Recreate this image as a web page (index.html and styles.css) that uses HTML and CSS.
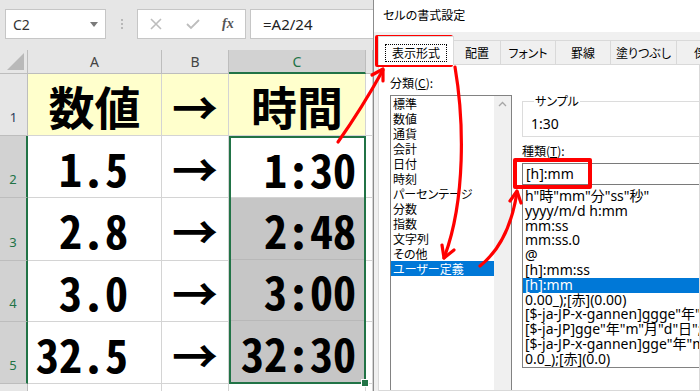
FILE: index.html
```html
<!DOCTYPE html>
<html lang="ja">
<head>
  <meta charset="UTF-8">
  <title>数値を時間に変換</title>
  <link rel="stylesheet" href="styles.css">
</head>
<body>
  <div class="screen">
    <div class="excel">
      <div class="formula-bar">
        <div class="name-box"><span>C2</span><span class="caret"></span></div>
        <div class="grip">
          <svg width="4" height="12" viewBox="0 0 4 12"><circle cx="2" cy="2" r="1" fill="#a8a8a8"/><circle cx="2" cy="6" r="1" fill="#a8a8a8"/><circle cx="2" cy="10" r="1" fill="#a8a8a8"/></svg>
        </div>
        <div class="fx-buttons">
          <svg class="btn-cancel" width="12" height="12" viewBox="0 0 12 12"><path d="M1 1 L11 11 M11 1 L1 11" stroke="#bdbdbd" stroke-width="1.6" fill="none"/></svg>
          <svg class="btn-enter" width="14" height="12" viewBox="0 0 14 12"><path d="M1 6 L5 10 L13 2" stroke="#bdbdbd" stroke-width="1.8" fill="none"/></svg>
          <span class="btn-fx">fx</span>
        </div>
        <div class="formula-input">=A2/24</div>
      </div>

      <div class="sheet">
        <!-- column headers -->
        <div class="cell corner"><span class="corner-mark"></span></div>
        <div class="cell col-head">A</div>
        <div class="cell col-head">B</div>
        <div class="cell col-head active">C</div>
        <div class="cell col-head"></div>

        <!-- row 1 -->
        <div class="cell row-head">1</div>
        <div class="cell title big">数値</div>
        <div class="cell title big">→</div>
        <div class="cell title big">時間</div>
        <div class="cell"></div>

        <!-- row 2 (selection C2:C5 spans four rows) -->
        <div class="cell row-head active">2</div>
        <div class="cell big num">1.5</div>
        <div class="cell big arrow">→</div>
        <div class="selection">
          <div class="sel-cell big time">1:30</div>
          <div class="sel-cell big time shaded">2:48</div>
          <div class="sel-cell big time shaded">3:00</div>
          <div class="sel-cell big time shaded last">32:30</div>
        </div>
        <div class="cell"></div>

        <!-- row 3 -->
        <div class="cell row-head active">3</div>
        <div class="cell big num">2.8</div>
        <div class="cell big arrow">→</div>
        <div class="cell"></div>

        <!-- row 4 -->
        <div class="cell row-head active">4</div>
        <div class="cell big num">3.0</div>
        <div class="cell big arrow">→</div>
        <div class="cell"></div>

        <!-- row 5 -->
        <div class="cell row-head active">5</div>
        <div class="cell big num">32.5</div>
        <div class="cell big arrow">→</div>
        <div class="cell"></div>

        <!-- row 6 (cut off) -->
        <div class="cell row-head"></div>
        <div class="cell"></div>
        <div class="cell"></div>
        <div class="cell"></div>
        <div class="cell"></div>
      </div>
    </div>

    <div class="dialog">
      <div class="dlg-title">セルの書式設定</div>
      <div class="tabs">
        <div class="tab tab-active"><span class="focus">表示形式</span></div>
        <div class="tab w-47">配置</div>
        <div class="tab w-55">フォント</div>
        <div class="tab w-55">罫線</div>
        <div class="tab w-66">塗りつぶし</div>
        <div class="tab w-60">保護</div>
      </div>
      <div class="panel">
        <div class="left-col">
          <div class="label">分類(<u>C</u>):</div>
          <div class="category-list">
            <div class="category-items">
              <div>標準</div>
              <div>数値</div>
              <div>通貨</div>
              <div>会計</div>
              <div>日付</div>
              <div>時刻</div>
              <div>パーセンテージ</div>
              <div>分数</div>
              <div>指数</div>
              <div>文字列</div>
              <div>その他</div>
              <div class="selected">ユーザー定義</div>
            </div>
            <div class="scrollbar">
              <svg width="9" height="6" viewBox="0 0 9 6"><path d="M1 5 L4.5 1.5 L8 5" stroke="#a6a6a6" stroke-width="1.3" fill="none"/></svg>
            </div>
          </div>
        </div>
        <div class="right-col">
          <fieldset class="sample">
            <legend>サンプル</legend>
            <div class="sample-value">1:30</div>
          </fieldset>
          <div class="label kind">種類(<u>T</u>):</div>
          <div class="format-input">[h]:mm</div>
          <div class="format-list">
            <div>h"時"mm"分"ss"秒"</div>
            <div>yyyy/m/d h:mm</div>
            <div>mm:ss</div>
            <div>mm:ss.0</div>
            <div>@</div>
            <div>[h]:mm:ss</div>
            <div class="selected">[h]:mm</div>
            <div>0.00_);[赤](0.00)</div>
            <div>[$-ja-JP-x-gannen]ggge"年"m"月"d"日";@</div>
            <div>[$-ja-JP]gge"年"m"月"d"日";@</div>
            <div>[$-ja-JP-x-gannen]gge"年"m"月"d"日";@</div>
            <div>0.0_);[赤](0.0)</div>
          </div>
        </div>
      </div>
    </div>

    <!-- red annotations drawn over the screenshot -->
    <svg class="annotations" width="700" height="391" viewBox="0 0 700 391">
      <g fill="none" stroke="#ff0000" stroke-linecap="round" stroke-linejoin="round">
        <rect x="377" y="37" width="74" height="28" stroke-width="4" stroke-linecap="butt"/>
        <rect x="515" y="160" width="75" height="27" stroke-width="4" stroke-linecap="butt"/>
        <path d="M338 142 Q362 108 383 70" stroke-width="3.2"/>
        <path d="M372 75 L383 69 L383 81" stroke-width="3.2"/>
        <path d="M455 67 C464 120 466 200 444 258" stroke-width="3.2"/>
        <path d="M442 245 L444 258 L454 250" stroke-width="3.2"/>
        <path d="M480 266 C500 250 512 225 517 192" stroke-width="3.2"/>
        <path d="M510 201 L517 191 L521 203" stroke-width="3.2"/>
      </g>
    </svg>
  </div>
</body>
</html>
```

FILE: styles.css
```css
body {
  margin: 0;
  width: 700px;
  height: 391px;
  overflow: hidden;
  background: #fff;
  font-family: "Noto Sans", "Noto Sans CJK JP", sans-serif;
  color: #222;
}

.screen {
  position: relative;
  display: flex;
  width: 700px;
  height: 391px;
  overflow: hidden;
}

/* ---------- spreadsheet ---------- */

.excel {
  width: 373px;
  flex: none;
  display: flex;
  flex-direction: column;
  overflow: hidden;
}

.formula-bar {
  height: 50px;
  flex: none;
  box-sizing: border-box;
  padding: 9px 0 0 5px;
  background: #e6e6e6;
  display: flex;
  align-items: flex-start;
}

.name-box {
  width: 101px;
  height: 30px;
  box-sizing: border-box;
  border: 1px solid #c6c6c6;
  background: #fff;
  display: flex;
  align-items: center;
  justify-content: space-between;
  padding: 0 7px;
  font-size: 14px;
  color: #333;
}

.caret {
  width: 0;
  height: 0;
  border-left: 4px solid transparent;
  border-right: 4px solid transparent;
  border-top: 5px solid #7a7a7a;
}

.grip {
  width: 31px;
  height: 30px;
  display: flex;
  align-items: center;
  justify-content: center;
}

.fx-buttons {
  width: 109px;
  height: 30px;
  box-sizing: border-box;
  border: 1px solid #c6c6c6;
  background: #fff;
  display: flex;
  align-items: center;
  padding-left: 12px;
}

.btn-enter {
  margin-left: 24px;
}

.btn-fx {
  margin-left: 22px;
  font-family: "Liberation Serif", serif;
  font-style: italic;
  font-weight: bold;
  font-size: 14px;
  color: #555;
}

.formula-input {
  flex: 1;
  height: 30px;
  margin-left: 4px;
  box-sizing: border-box;
  border: 1px solid #c6c6c6;
  border-right: none;
  background: #fff;
  padding-left: 12px;
  line-height: 28px;
  font-size: 15px;
  color: #222;
}

.sheet {
  flex: 1;
  display: grid;
  grid-template-columns: 28px 134px 67px 137px 7px;
  grid-template-rows: 24px 62px 62px 63px 61px 62px 1fr;
}

.cell {
  box-sizing: border-box;
  border-right: 1px solid #d4d4d4;
  border-bottom: 1px solid #d4d4d4;
  display: flex;
  align-items: center;
  white-space: nowrap;
}

.corner {
  background: #e6e6e6;
  border-color: #bdbdbd;
  position: relative;
}

.corner-mark {
  position: absolute;
  right: 3px;
  bottom: 3px;
  width: 0;
  height: 0;
  border-left: 17px solid transparent;
  border-bottom: 17px solid #b9b9b9;
}

.col-head {
  background: #e6e6e6;
  border-color: #bdbdbd;
  justify-content: center;
  font-size: 14px;
  color: #444;
}

.col-head.active {
  background: #d2d2d2;
  color: #217346;
  border-bottom: 2px solid #217346;
}

.row-head {
  background: #e6e6e6;
  border-color: #bdbdbd;
  justify-content: center;
  align-items: flex-end;
  padding-bottom: 9px;
  font-size: 13px;
  color: #2c3a5a;
}

.row-head.active {
  background: #d2d2d2;
  color: #217346;
  border-right: 2px solid #217346;
}

.big {
  font-family: "Noto Sans CJK JP", sans-serif;
  font-weight: 700;
  font-size: 46px;
  line-height: 1;
  color: #000;
}

.title {
  background: #ffffcc;
  justify-content: center;
}

.arrow {
  justify-content: center;
}

.num {
  justify-content: flex-end;
  padding-right: 33px;
  font-feature-settings: "hwid";
}

/* C2:C5, the active range */
.selection {
  grid-row: span 4;
  box-sizing: border-box;
  border: 2px solid #217346;
  position: relative;
  display: grid;
  grid-template-rows: 60px 62px 61px 61px;
}

.selection::after {
  content: "";
  position: absolute;
  right: -5px;
  bottom: -5px;
  width: 6px;
  height: 6px;
  background: #217346;
  border: 1px solid #fff;
}

.sel-cell {
  display: flex;
  align-items: center;
  justify-content: flex-end;
  padding-right: 8px;
  border-bottom: 1px solid #d4d4d4;
  white-space: nowrap;
}

.sel-cell.last {
  border-bottom: none;
}

.time {
  font-feature-settings: "hwid";
}

.shaded {
  background: #c6c6c6;
  border-bottom-color: #b8b8b8;
}

/* ---------- format cells dialog ---------- */

.dialog {
  width: 327px;
  flex: none;
  box-sizing: border-box;
  border-left: 1px solid #8c8c8c;
  background: #f0f0f0;
  display: flex;
  flex-direction: column;
  overflow: hidden;
  font-family: "Noto Sans CJK JP", sans-serif;
  font-feature-settings: "palt";
  font-size: 12px;
  color: #000;
}

.dlg-title {
  height: 32px;
  flex: none;
  background: #fff;
  padding-left: 9px;
  line-height: 30px;
}

.tabs {
  height: 32px;
  flex: none;
  display: flex;
  align-items: flex-end;
  padding-left: 4px;
}

.tab {
  height: 24px;
  flex: none;
  box-sizing: border-box;
  border: 1px solid #d9d9d9;
  border-bottom: none;
  margin-left: -1px;
  background: #f0f0f0;
  display: flex;
  align-items: center;
  justify-content: center;
}

.tab.tab-active {
  width: 76px;
  height: 29px;
  margin-left: 0;
  margin-bottom: -1px;
  padding-top: 3px;
  background: #fff;
  position: relative;
  z-index: 1;
}

.focus {
  outline: 1px dotted #000;
  padding: 0 6px;
  line-height: 16px;
}

.w-47 { width: 48px; }
.w-55 { width: 56px; }
.w-66 { width: 67px; }
.w-60 { width: 60px; }

.panel {
  flex: 1;
  margin-left: 4px;
  box-sizing: border-box;
  border: 1px solid #d9d9d9;
  background: #fff;
  display: flex;
  gap: 10px;
  padding: 10px 0 0 11px;
  overflow: hidden;
}

.left-col {
  width: 122px;
  flex: none;
}

.label {
  height: 16px;
  line-height: 16px;
}

.category-list {
  margin-top: 4px;
  height: 320px;
  box-sizing: border-box;
  border: 1px solid #828282;
  display: flex;
}

.category-items {
  flex: 1;
}

.category-items div {
  height: 15px;
  line-height: 15px;
  padding-left: 2px;
  white-space: nowrap;
}

.selected {
  background: #0078d7;
  color: #fff;
}

.scrollbar {
  width: 17px;
  flex: none;
  background: #f0f0f0;
  display: flex;
  justify-content: center;
  padding-top: 5px;
  box-sizing: border-box;
}

.right-col {
  width: 210px;
  flex: none;
}

.sample {
  margin: 19px 0 0;
  padding: 8px 0 4px 8px;
  border: 1px solid #dcdcdc;
}

.sample legend {
  padding: 0 1px;
  margin-left: 3px;
  line-height: 14px;
}

.sample-value {
  font-family: "Noto Sans", "Noto Sans CJK JP", sans-serif;
  font-feature-settings: normal;
  font-size: 14px;
  line-height: 16px;
}

.kind {
  margin-top: 6px;
}

.format-input {
  margin-top: 4px;
  height: 22px;
  box-sizing: border-box;
  border: 1px solid #7a7a7a;
  padding-left: 3px;
  line-height: 20px;
  font-family: "Noto Sans", "Noto Sans CJK JP", sans-serif;
  font-feature-settings: normal;
  font-size: 14px;
}

.format-list {
  height: 183px;
  box-sizing: border-box;
  border: 1px solid #828282;
  border-top: none;
  padding-top: 4px;
  font-family: "Noto Sans", "Noto Sans CJK JP", sans-serif;
  font-feature-settings: normal;
  font-size: 14px;
}

.format-list div {
  height: 14.8px;
  line-height: 14.8px;
  padding-left: 2px;
  white-space: nowrap;
}

.annotations {
  position: absolute;
  top: 0;
  left: 0;
  pointer-events: none;
}
```
